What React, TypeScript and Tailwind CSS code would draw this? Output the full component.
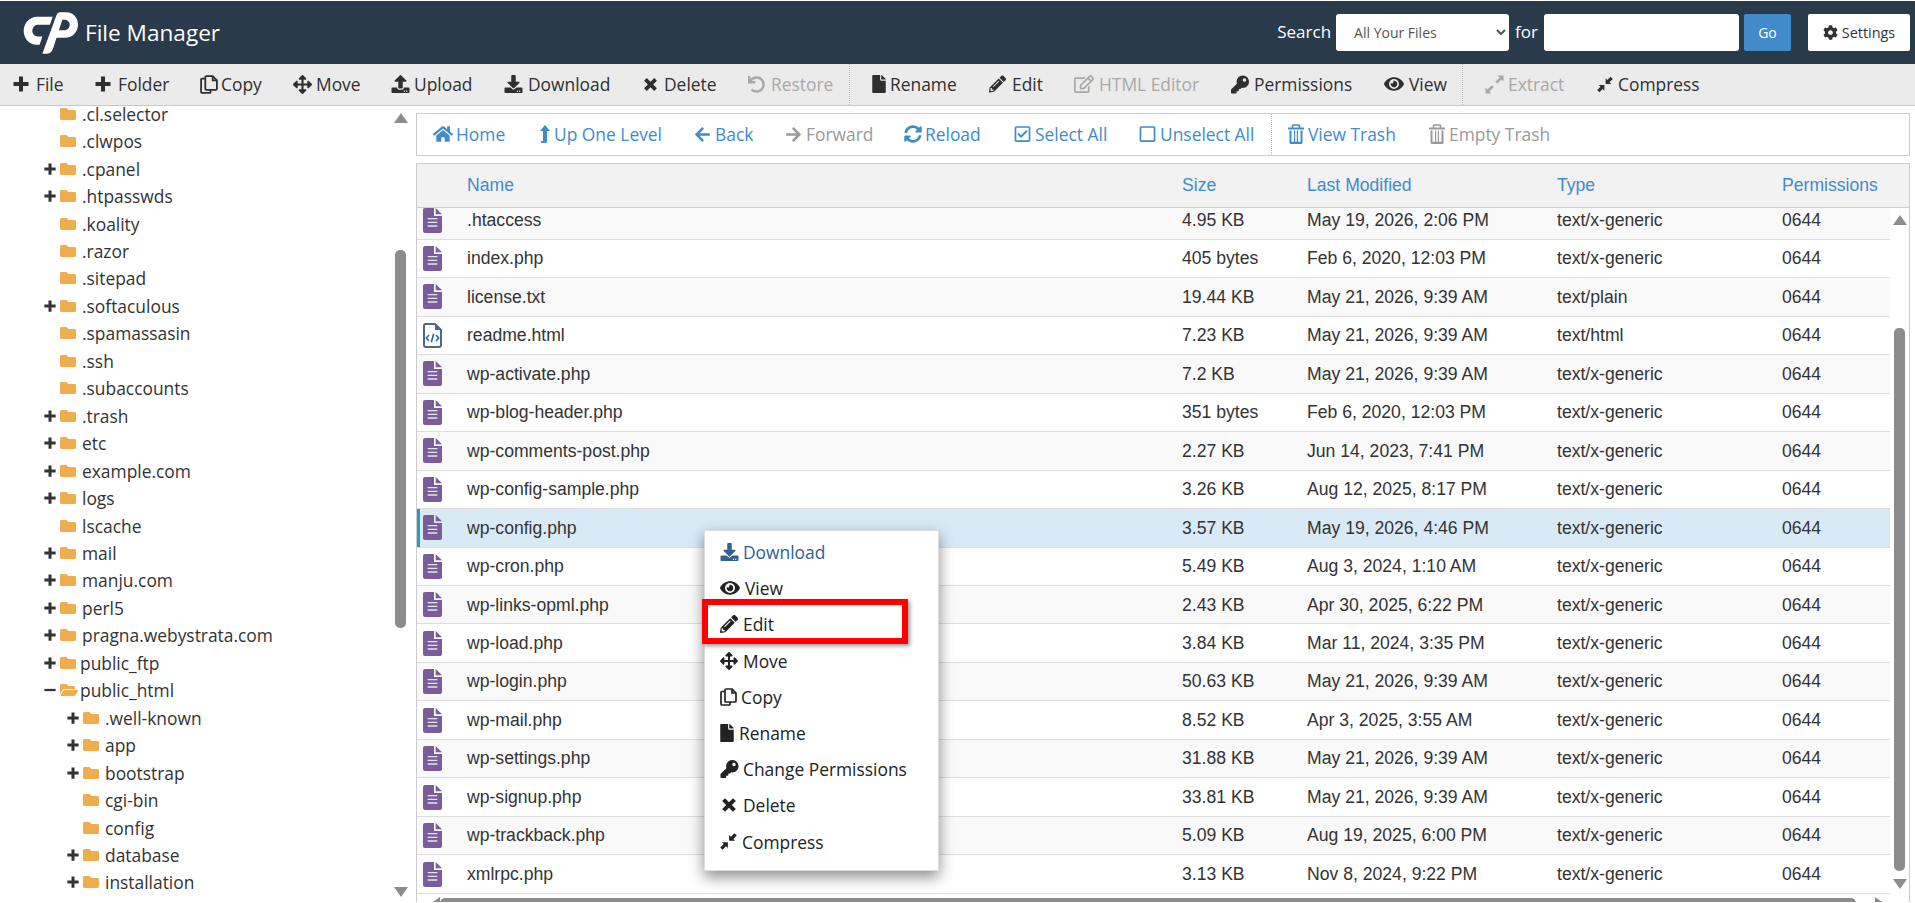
import type { ReactNode } from "react";
import {
  FaArrowsAlt, FaUpload, FaDownload, FaUndo, FaFile, FaPencilAlt,
  FaRegEdit, FaKey, FaEye, FaHome, FaArrowLeft, FaArrowRight,
  FaSyncAlt, FaRegCheckSquare, FaRegSquare, FaCog, FaFolder, FaFolderOpen,
} from "react-icons/fa";

const sans = "font-['Open_Sans',sans-serif]";

function Logo() {
  return (
    <svg viewBox="38 28 165 125" className="w-[55px] h-[42px] text-white" fill="currentColor">
      <path d="M80 42H127L119 66H82C72 66 66 76 66 84C66 94 73 101 82 101H96L88 126H78C56 126 40 106 40 84C40 62 58 42 80 42Z" />
      <path d="M150 28H168C190 28 203 45 203 65C203 88 186 105 165 105H130L138 82H165C172 82 178 74 178 66C178 58 172 51 164 51H156L128 138C124 149 116 153 106 153H96L138 38C141 31 144 28 150 28Z" />
    </svg>
  );
}

function Plus({ className }: { className: string }) {
  return (
    <svg viewBox="0 0 16 16" className={className} fill="currentColor">
      <path d="M6 0.5H10V6H15.5V10H10V15.5H6V10H0.5V6H6Z" />
    </svg>
  );
}

function Cross({ className }: { className: string }) {
  return (
    <svg viewBox="1 1 14 14" className={className} fill="currentColor">
      <path d="M2 4.5L4.5 2L8 5.5L11.5 2L14 4.5L10.5 8L14 11.5L11.5 14L8 10.5L4.5 14L2 11.5L5.5 8Z" />
    </svg>
  );
}

function Copy({ className }: { className: string }) {
  return (
    <svg viewBox="0 0 17 18" className={className} fill="none" stroke="currentColor" strokeWidth="1.7">
      <path d="M5 3.5H2Q1 3.5 1 4.5V16Q1 17 2 17H9Q10 17 10 16V14" />
      <path d="M6 1H12L16 5V13Q16 14 15 14H6Q5 14 5 13V2Q5 1 6 1Z" />
      <path d="M12 1V5H16" />
    </svg>
  );
}

function Compress({ className }: { className: string }) {
  return (
    <svg viewBox="0 0 16 16" className={className} fill="currentColor">
      <path d="M8.6 7.4V1.8L10.3 3.5L13.6 0.2L15.8 2.4L12.5 5.7L14.2 7.4Z" />
      <path d="M7.4 8.6V14.2L5.7 12.5L2.4 15.8L0.2 13.6L3.5 10.3L1.8 8.6Z" />
    </svg>
  );
}

function Expand({ className }: { className: string }) {
  return (
    <svg viewBox="0 0 16 16" className={className} fill="currentColor">
      <path d="M15.6 0.4V5.4L13.9 3.7L10.3 7.3L8.7 5.7L12.3 2.1L10.6 0.4Z" />
      <path d="M0.4 15.6V10.6L2.1 12.3L5.7 8.7L7.3 10.3L3.7 13.9L5.4 15.6Z" />
    </svg>
  );
}

function LongUp({ className }: { className: string }) {
  return (
    <svg viewBox="0 0 11 18" className={className} fill="currentColor">
      <path d="M6 0L11 6H8V16.5Q8 18 6.5 18H2V16H4V6H1Z" />
    </svg>
  );
}

function Trash({ className }: { className: string }) {
  return (
    <svg viewBox="0 0 16 20" className={className} fill="currentColor">
      <path d="M0 3.5H16V5.5H0Z" />
      <path d="M4.5 4V1.8Q4.5 1 5.3 1H10.7Q11.5 1 11.5 1.8V4" fill="none" stroke="currentColor" strokeWidth="1.6" />
      <path d="M1.5 6.5H3.5V17.8H6V6.5H7.2V17.8H8.8V6.5H10V17.8H12.5V6.5H14.5V18.5Q14.5 20 13 20H3Q1.5 20 1.5 18.5Z" />
    </svg>
  );
}

function Tool({ icon, label, w, gap, off }: { icon: ReactNode; label: string; w: string; gap: string; off?: boolean }) {
  return (
    <div className={`flex items-center shrink-0 whitespace-nowrap ${w} ${gap} ${off ? "text-[#a8a8a8]" : "text-[#2f2f2f]"}`}>
      {icon}
      <span>{label}</span>
    </div>
  );
}

function NavLink({ icon, label, w, gap, off }: { icon: ReactNode; label: string; w: string; gap: string; off?: boolean }) {
  return (
    <div className={`flex items-center shrink-0 whitespace-nowrap ${w} ${gap} ${off ? "text-[#9a9a9a]" : "text-[#428bca]"}`}>
      {icon}
      <span>{label}</span>
    </div>
  );
}

const tree: [string, number, string][] = [
  [".cl.selector", 1, "none"], [".clwpos", 1, "none"], [".cpanel", 1, "plus"], [".htpasswds", 1, "plus"],
  [".koality", 1, "none"], [".razor", 1, "none"], [".sitepad", 1, "none"], [".softaculous", 1, "plus"],
  [".spamassasin", 1, "none"], [".ssh", 1, "none"], [".subaccounts", 1, "none"], [".trash", 1, "plus"],
  ["etc", 1, "plus"], ["example.com", 1, "plus"], ["logs", 1, "plus"], ["lscache", 1, "none"],
  ["mail", 1, "plus"], ["manju.com", 1, "plus"], ["perl5", 1, "plus"], ["pragna.webystrata.com", 1, "plus"],
  ["public_ftp", 1, "plus"], ["public_html", 1, "minus"], [".well-known", 2, "plus"], ["app", 2, "plus"],
  ["bootstrap", 2, "plus"], ["cgi-bin", 2, "none"], ["config", 2, "none"], ["database", 2, "plus"],
  ["installation", 2, "plus"],
];

const files: [string, string, string, string][] = [
  [".htaccess", "4.95 KB", "May 19, 2026, 2:06 PM", "text/x-generic"],
  ["index.php", "405 bytes", "Feb 6, 2020, 12:03 PM", "text/x-generic"],
  ["license.txt", "19.44 KB", "May 21, 2026, 9:39 AM", "text/plain"],
  ["readme.html", "7.23 KB", "May 21, 2026, 9:39 AM", "text/html"],
  ["wp-activate.php", "7.2 KB", "May 21, 2026, 9:39 AM", "text/x-generic"],
  ["wp-blog-header.php", "351 bytes", "Feb 6, 2020, 12:03 PM", "text/x-generic"],
  ["wp-comments-post.php", "2.27 KB", "Jun 14, 2023, 7:41 PM", "text/x-generic"],
  ["wp-config-sample.php", "3.26 KB", "Aug 12, 2025, 8:17 PM", "text/x-generic"],
  ["wp-config.php", "3.57 KB", "May 19, 2026, 4:46 PM", "text/x-generic"],
  ["wp-cron.php", "5.49 KB", "Aug 3, 2024, 1:10 AM", "text/x-generic"],
  ["wp-links-opml.php", "2.43 KB", "Apr 30, 2025, 6:22 PM", "text/x-generic"],
  ["wp-load.php", "3.84 KB", "Mar 11, 2024, 3:35 PM", "text/x-generic"],
  ["wp-login.php", "50.63 KB", "May 21, 2026, 9:39 AM", "text/x-generic"],
  ["wp-mail.php", "8.52 KB", "Apr 3, 2025, 3:55 AM", "text/x-generic"],
  ["wp-settings.php", "31.88 KB", "May 21, 2026, 9:39 AM", "text/x-generic"],
  ["wp-signup.php", "33.81 KB", "May 21, 2026, 9:39 AM", "text/x-generic"],
  ["wp-trackback.php", "5.09 KB", "Aug 19, 2025, 6:00 PM", "text/x-generic"],
  ["xmlrpc.php", "3.13 KB", "Nov 8, 2024, 9:22 PM", "text/x-generic"],
];

function FileIcon() {
  return (
    <svg viewBox="0 0 57 75" className="w-[19px] h-[25px]">
      <path fill="#7a5c9a" d="M0 6Q0 0 6 0H33V24H57V69Q57 75 51 75H6Q0 75 0 69Z" />
      <path fill="#7a5c9a" d="M38 0L57 19H38Z" />
      <path fill="#e8e3ef" d="M14 30H43V34H14ZM14 41H43V45H14ZM14 52H43V56H14Z" />
    </svg>
  );
}

function CodeIcon() {
  return (
    <svg viewBox="0 0 57 75" className="w-[19px] h-[25px]" fill="none">
      <path stroke="#4f6788" strokeWidth="6" d="M8 3H36L54 21V66Q54 72 48 72H9Q3 72 3 66V9Q3 3 8 3Z" />
      <path fill="#4f6788" d="M36 3L54 21H36Z" />
      <path stroke="#2f6fa8" strokeWidth="5" d="M18 36L10 45L18 54M39 36L47 45L39 54M32 32L25 58" />
    </svg>
  );
}

function Arrow({ dir }: { dir: "up" | "down" | "left" | "right" }) {
  const d = { up: "M7 0L14 10H0Z", down: "M0 0H14L7 10Z", left: "M10 0V14L0 7Z", right: "M0 0L10 7L0 14Z" }[dir];
  const box = dir === "up" || dir === "down" ? "0 0 14 10" : "0 0 10 14";
  const size = dir === "up" || dir === "down" ? "w-[14px] h-[10px]" : "w-[10px] h-[14px]";
  return (
    <svg viewBox={box} className={size} fill="#8c8c8c">
      <path d={d} />
    </svg>
  );
}

const menu: [ReactNode, string, string][] = [
  [<FaDownload className="w-[19px] h-[18px]" />, "Download", "gap-[4px]"],
  [<FaEye className="w-[20px] h-[18px]" />, "View", "gap-[5px]"],
  [<FaPencilAlt className="w-[18px] h-[18px]" />, "Edit", "gap-[5px]"],
  [<FaArrowsAlt className="w-[18px] h-[18px]" />, "Move", "gap-[5px]"],
  [<Copy className="w-[17px] h-[18px]" />, "Copy", "gap-[4px]"],
  [<FaFile className="w-[14px] h-[18px]" />, "Rename", "gap-[5px]"],
  [<FaKey className="w-[19px] h-[18px]" />, "Change Permissions", "gap-[4px]"],
  [<Cross className="w-[16px] h-[16px] ml-[1px]" />, "Delete", "gap-[6px]"],
  [<Compress className="w-[17px] h-[17px]" />, "Compress", "gap-[5px]"],
];

export default function App() {
  return (
    <div className={`relative w-[1915px] h-[903px] overflow-hidden bg-white pt-px text-[17.4px] ${sans}`}>
      <header className="h-[63px] bg-[#293a4a] flex items-center pl-[23px] pr-[5px] text-white">
        <Logo />
        <span className="ml-[7px] text-[22.6px] leading-none mt-[1px]">File Manager</span>
        <div className="ml-auto flex items-center h-[37px]">
          <span className="mr-[5px] -mt-[2px] text-[17px]">Search</span>
          <select className="w-[173px] h-[37px] rounded-[3px] bg-white text-[#555] text-[14px] pl-[14px]">
            <option>All Your Files</option>
          </select>
          <span className="mx-[6px] -mt-[2px] text-[17px]">for</span>
          <div className="w-[195px] h-[37px] rounded-[3px] bg-white" />
          <div className="ml-[5px] w-[47px] h-[37px] bg-[#428bca] rounded-[2px] flex items-center justify-center text-[14px]">Go</div>
          <div className="ml-[17px] w-[102px] h-[37px] bg-white rounded-[2px] flex items-center justify-center gap-[4px] text-[14.4px] text-[#333]">
            <FaCog className="w-[15px] h-[15px]" />
            Settings
          </div>
        </div>
      </header>

      <div className="h-[42px] bg-[#ebebeb] border-b border-[#c8c8c8] flex items-center pl-[13px]">
        <Tool w="w-[82px]" gap="gap-[7px]" label="File" icon={<Plus className="w-[16px] h-[16px]" />} />
        <Tool w="w-[105px]" gap="gap-[7px]" label="Folder" icon={<Plus className="w-[16px] h-[16px]" />} />
        <Tool w="w-[93px]" gap="gap-[3px]" label="Copy" icon={<Copy className="w-[18px] h-[19px]" />} />
        <Tool w="w-[98px]" gap="gap-[4px]" label="Move" icon={<FaArrowsAlt className="w-[19px] h-[19px]" />} />
        <Tool w="w-[113px]" gap="gap-[4px]" label="Upload" icon={<FaUpload className="w-[19px] h-[18px]" />} />
        <Tool w="w-[139px]" gap="gap-[5px]" label="Download" icon={<FaDownload className="w-[19px] h-[18px]" />} />
        <Tool w="w-[105px]" gap="gap-[6px]" label="Delete" icon={<Cross className="w-[15px] h-[15px]" />} />
        <Tool w="w-[101px]" gap="gap-[6px]" off label="Restore" icon={<FaUndo className="w-[17px] h-[17px]" />} />
        <div className="h-full border-l border-dotted border-[#bbb] mr-[22px]" />
        <Tool w="w-[117px]" gap="gap-[4px]" label="Rename" icon={<FaFile className="w-[14px] h-[18px]" />} />
        <Tool w="w-[85px]" gap="gap-[6px]" label="Edit" icon={<FaPencilAlt className="w-[17px] h-[18px]" />} />
        <Tool w="w-[157px]" gap="gap-[5px]" off label="HTML Editor" icon={<FaRegEdit className="w-[20px] h-[18px]" />} />
        <Tool w="w-[153px]" gap="gap-[5px]" label="Permissions" icon={<FaKey className="w-[18px] h-[19px]" />} />
        <Tool w="w-[78px]" gap="gap-[5px]" label="View" icon={<FaEye className="w-[20px] h-[18px]" />} />
        <div className="h-full border-l border-dotted border-[#bbb] mr-[22px]" />
        <Tool w="w-[112px]" gap="gap-[4px]" off label="Extract" icon={<Expand className="w-[19px] h-[19px]" />} />
        <Tool w="w-[120px]" gap="gap-[5px]" label="Compress" icon={<Compress className="w-[16px] h-[17px]" />} />
      </div>

      <div className="flex h-[796px]">
        <div className="relative w-[416px] shrink-0 overflow-hidden">
          <div className="-mt-[6px] text-[#333]">
            {tree.map(([name, depth, mark]) => (
              <div key={name} className={`h-[27.46px] flex items-center ${depth === 1 ? "pl-[44px]" : "pl-[67px]"}`}>
                <div className="w-[15px] shrink-0">
                  {mark === "plus" && <Plus className="w-[12px] h-[12px]" />}
                  {mark === "minus" && (
                    <svg viewBox="0 0 16 16" className="w-[12px] h-[12px]" fill="currentColor">
                      <path d="M0.5 6.5H15.5V9.5H0.5Z" />
                    </svg>
                  )}
                </div>
                {mark === "minus" ? (
                  <FaFolderOpen className="w-[20px] h-[16px] text-[#f0ad4e] shrink-0" />
                ) : (
                  <FaFolder className="w-[18px] h-[16px] text-[#f0ad4e] shrink-0" />
                )}
                <span className={`leading-[16px] ${name === "public_ftp" ? "ml-[3px]" : name === "public_html" ? "ml-[1px]" : "ml-[5px]"}`}>{name}</span>
              </div>
            ))}
          </div>
          <div className="absolute left-[394px] top-[7px]"><Arrow dir="up" /></div>
          <div className="absolute left-[395px] top-[144px] w-[11px] h-[378px] rounded-[5px] bg-[#8c8c8c]" />
          <div className="absolute left-[394px] top-[781px]"><Arrow dir="down" /></div>
        </div>

        <div className="flex-1 pr-[5px] pt-[7px] flex flex-col gap-[7px]">
          <div className="h-[43px] border border-[#ccc] flex items-center pl-[16px] shrink-0">
            <NavLink w="w-[106px]" gap="gap-[3px]" label="Home" icon={<FaHome className="w-[20px] h-[18px]" />} />
            <NavLink w="w-[155px]" gap="gap-[4px]" label="Up One Level" icon={<LongUp className="w-[11px] h-[18px]" />} />
            <NavLink w="w-[91px]" gap="gap-[4px]" label="Back" icon={<FaArrowLeft className="w-[17px] h-[17px]" />} />
            <NavLink w="w-[119px]" gap="gap-[4px]" off label="Forward" icon={<FaArrowRight className="w-[17px] h-[17px]" />} />
            <NavLink w="w-[110px]" gap="gap-[3px]" label="Reload" icon={<FaSyncAlt className="w-[18px] h-[18px]" />} />
            <NavLink w="w-[125px]" gap="gap-[4px]" label="Select All" icon={<FaRegCheckSquare className="w-[17px] h-[18px]" />} />
            <NavLink w="w-[132px]" gap="gap-[4px]" label="Unselect All" icon={<FaRegSquare className="w-[17px] h-[18px]" />} />
            <div className="h-full border-l border-dotted border-[#bbb] mr-[16px]" />
            <NavLink w="w-[141px]" gap="gap-[4px]" label="View Trash" icon={<Trash className="w-[16px] h-[20px]" />} />
            <NavLink w="w-[140px]" gap="gap-[4px]" off label="Empty Trash" icon={<Trash className="w-[16px] h-[20px]" />} />
          </div>

          <div className="relative flex-1 border-x border-t border-[#ccc] overflow-hidden font-['Liberation_Sans',sans-serif] text-[17.6px] text-[#333]">
            <div className="h-[44px] bg-[#f2f2f2] border-b border-[#ccc] grid grid-cols-[50px_715px_125px_250px_225px_1fr] items-center text-[#428bca] relative z-10">
              <span />
              <span>Name</span>
              <span>Size</span>
              <span>Last Modified</span>
              <span>Type</span>
              <span>Permissions</span>
            </div>
            <div className="w-[1473px] -mt-[6.7px]">
              {files.map(([name, size, date, type], i) => (
                <div
                  key={name}
                  className={`relative h-[38.47px] border-b border-[#ddd] grid grid-cols-[50px_715px_125px_250px_225px_1fr] items-center ${
                    name === "wp-config.php" ? "bg-[#d9eaf7]" : i % 2 === 0 ? "bg-[#f9f9f9]" : "bg-white"
                  }`}
                >
                  {name === "wp-config.php" && <div className="absolute left-0 top-0 bottom-0 w-[3px] bg-[#2b9ac4]" />}
                  <div className="pl-[6px] flex">{name === "readme.html" ? <CodeIcon /> : <FileIcon />}</div>
                  <span>{name}</span>
                  <span>{size}</span>
                  <span>{date}</span>
                  <span>{type}</span>
                  <span>0644</span>
                </div>
              ))}
            </div>
            <div className="absolute left-[1476px] top-[51px]"><Arrow dir="up" /></div>
            <div className="absolute left-[1477px] top-[164px] w-[11px] h-[543px] rounded-[5px] bg-[#8c8c8c]" />
            <div className="absolute left-[1476px] top-[715px]"><Arrow dir="down" /></div>
            <div className="absolute left-[13px] top-[733px]"><Arrow dir="left" /></div>
            <div className="absolute left-[23px] top-[734px] w-[1416px] h-[7px] rounded-t-[5px] bg-[#8c8c8c]" />
            <div className="absolute left-[1458px] top-[733px]"><Arrow dir="right" /></div>
          </div>
        </div>
      </div>

      <div className="absolute left-[704px] top-[530px] w-[235px] h-[341px] bg-white border border-[#ddd] shadow-[0_6px_14px_rgba(0,0,0,0.45)] pt-[3px] pl-[15px] text-[#222]">
        {menu.map(([icon, label, gap], i) => (
          <div key={label} className={`h-[36.2px] flex items-center ${gap} ${i === 0 ? "text-[#31618f]" : ""}`}>
            {icon}
            <span>{label}</span>
          </div>
        ))}
        <div className="absolute left-[-3px] top-[68px] w-[206px] h-[45px] border-[6px] border-[#ff0000] shadow-[2px_2px_4px_rgba(0,0,0,0.4)]" />
      </div>
    </div>
  );
}
